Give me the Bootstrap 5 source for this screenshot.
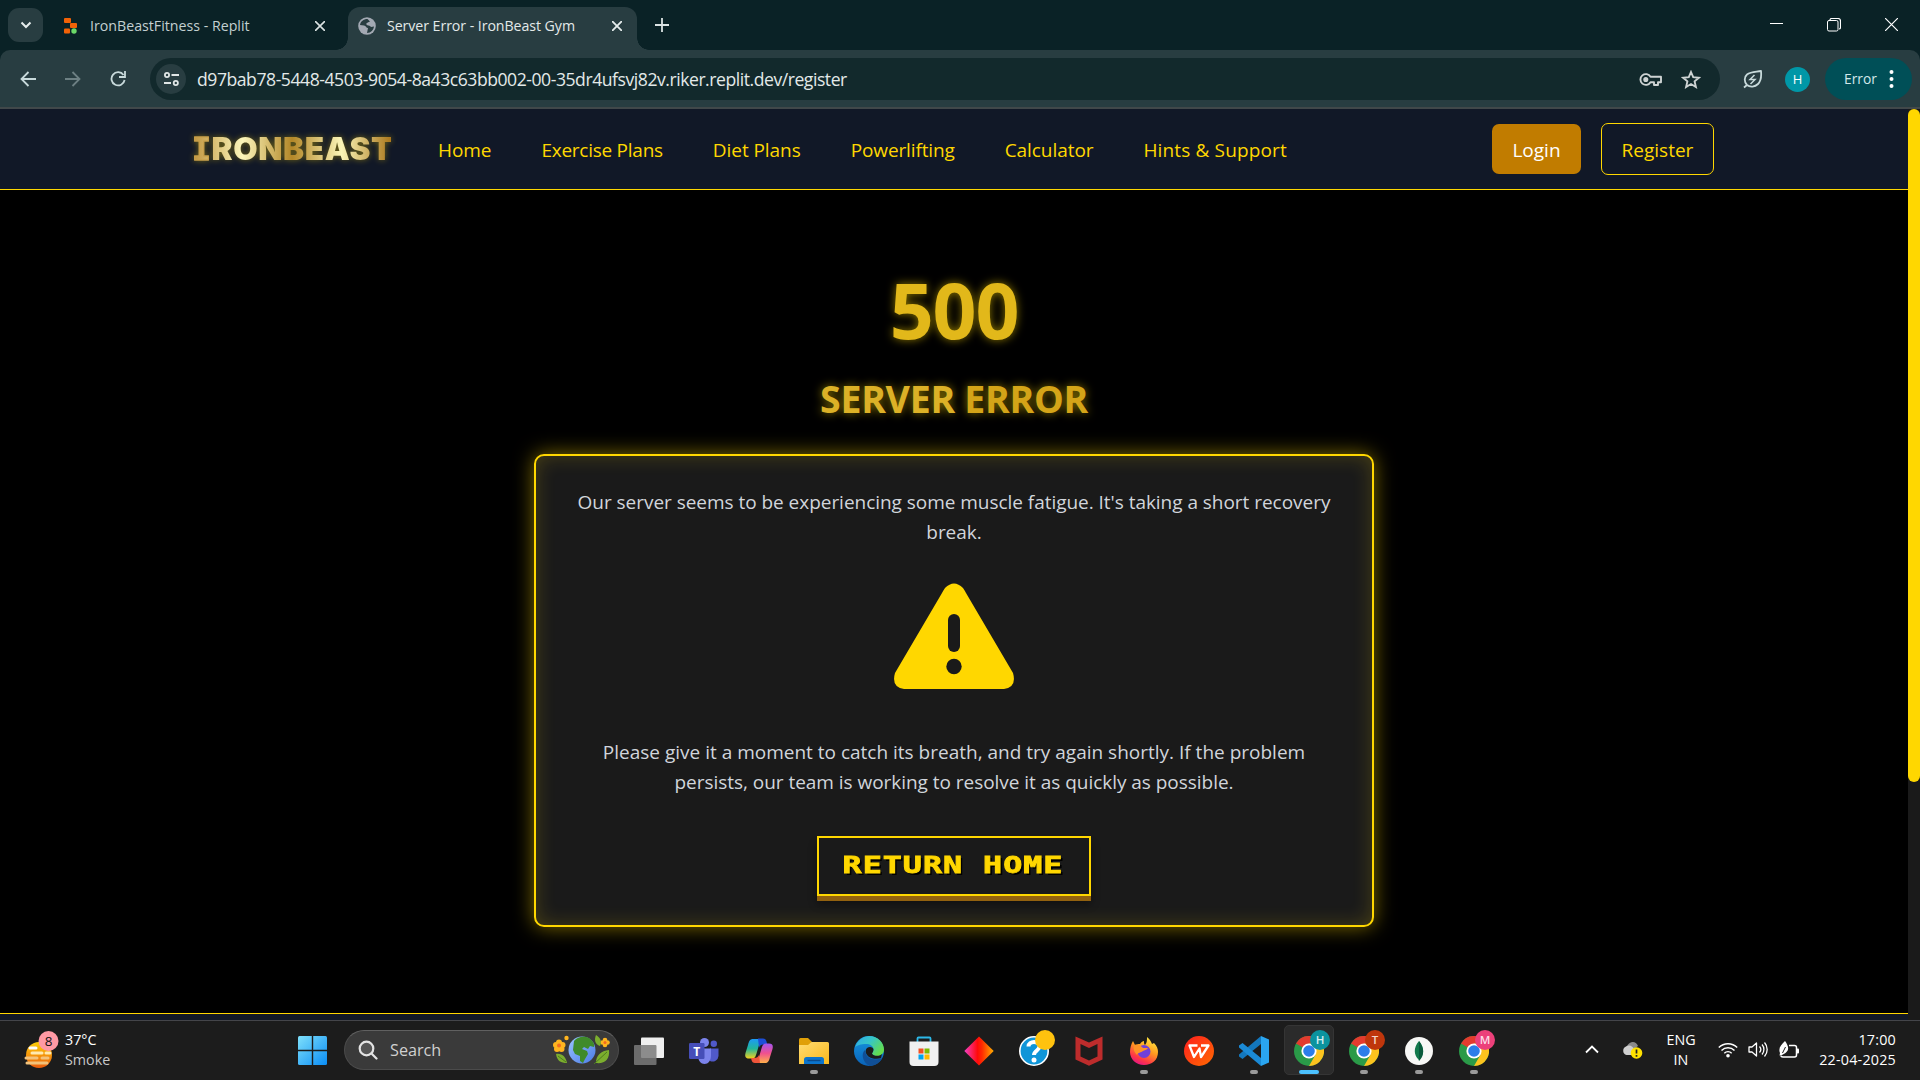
<!DOCTYPE html>
<html lang="en">
<head>
<meta charset="utf-8">
<title>Server Error - IronBeast Gym</title>
<link href="https://cdn.jsdelivr.net/npm/bootstrap@5.3.0/dist/css/bootstrap.min.css" rel="stylesheet">
<style>
:root{--gold:#ffd700}
html,body{height:100%}
body{width:1920px;height:1080px;overflow:hidden;background:#000;font-family:"Open Sans","Noto Sans",sans-serif;font-size:19px;line-height:30px;color:#d1d5db}
svg{display:block;flex:none}
span,p,a{white-space:nowrap}
/* browser frame */
.tabstrip{height:50px;background:#0a2226;font-size:14.2px;padding-left:8px}
.tabsearch{width:35px;height:34px;border-radius:11px;background:#283d41;margin-top:8px}
.tab-idle{width:305px;height:43px;margin-top:4px;padding:0 23px 0 21px;color:#c3d0d1}
.tab-live{width:289px;height:43px;margin-top:7px;border-radius:12px 12px 0 0;background:#283d41;padding:0 15px 6px 10px;color:#e3e9e9;position:relative}
.tab-live::before,.tab-live::after{content:"";position:absolute;bottom:0;width:12px;height:12px}
.tab-live::before{left:-12px;background:radial-gradient(circle at 0 0,transparent 11.5px,#283d41 12px)}
.tab-live::after{right:-12px;background:radial-gradient(circle at 100% 0,transparent 11.5px,#283d41 12px)}
.tab-name{margin-left:13px}
.tab-live .tab-name{margin-left:11px;letter-spacing:-.07px}
.tab-add{margin:18px 0 0 18px}
.wincontrols{padding:18px 22px 0 0;gap:44px}
.toolbar-wrap{background:#0a2226}
.browserbar{height:57px;background:#283d41;border-radius:10px 10px 0 0;padding:1px 8px 0 20px}
.navkeys{gap:29px}
.frameline{height:2px;background:#41484a}
.omni{width:1570px;height:42px;border-radius:21px;background:#12292c;margin-left:24px;padding:0 19px 0 6px;font-size:17.6px;letter-spacing:-.46px;color:#e3e9e9}
.siteinfo{width:30px;height:30px;border-radius:50%;background:#283d41;margin-right:11px}
.ico-star{margin-left:18px}
.ico-leaf{margin-left:23px}
.avatar-h{width:25px;height:25px;border-radius:50%;background:#0097a7;color:#fff;font-size:13px;margin-left:22px}
.errpill{width:87px;height:42px;border-radius:21px;background:#004f57;color:#d3e8ea;font-size:13.8px;margin-left:15px;padding:0 18px 0 19px}
/* page */
.viewport{height:911px;overflow:hidden}
.pagebody{width:1908px;background:#000}
.scrolltrack{width:12px;background:#1a1a1a}
.scrollthumb{height:673px;border-radius:6px;background:var(--gold)}
.sitenav{height:81px;background:#111827;border-bottom:1px solid var(--gold);padding:0 194px 0 193px}
.brandname{font-family:Inter,sans-serif;font-weight:900;font-size:31.5px;line-height:40px;letter-spacing:.6px;background:linear-gradient(90deg,#bf953f 0%,#fcf6ba 25%,#b38728 50%,#fbf5b7 75%,#aa771c 100%);-webkit-background-clip:text;background-clip:text;color:transparent;filter:drop-shadow(0 0 3px rgba(255,215,0,.4));width:198px}
.brandname b{font-family:"DejaVu Sans Mono",monospace;font-weight:700;-webkit-text-stroke:1px #c99f48;margin-left:-1px}
.menu{gap:50px;margin-left:47px;margin-top:1px}
.menu a{color:var(--gold);text-decoration:none;letter-spacing:-.06px}
.menu a:nth-child(2){letter-spacing:-.26px}
.menu a:nth-child(4){letter-spacing:-.13px}
.menu a:nth-child(6){letter-spacing:.14px}
.btn-login,.btn-reg{border-radius:7px;font-size:19px;line-height:30px;padding:2px 0 0}
.btn-login{width:89px;height:50px;background:#c17c00;color:#fff}
.btn-reg{width:113px;height:52px;border:1px solid var(--gold);color:var(--gold);margin-left:20px}
.goldtext{font-weight:700;text-shadow:0 0 10px rgba(255,215,0,.55)}
.code{font-size:77px;line-height:80px;letter-spacing:-1.2px;margin-top:80px;color:#e2b81a}
.title{font-size:37.5px;line-height:44px;letter-spacing:-.3px;margin-top:27px;color:#dcb127}
.title i{font-style:normal;color:#d4a418}
.errbox{width:840px;height:473px;margin-top:33px;border:2px solid var(--gold);border-radius:10px;background:#1a1a1a;box-shadow:0 0 20px rgba(255,215,0,.5),inset 0 0 20px rgba(255,215,0,.2);padding-top:31px}
.msg{letter-spacing:-.035px}
.warn{margin:36px 0 47px}
.retro{width:274px;height:60px;border:2px solid var(--gold);background:#1a1a1a;box-shadow:0 5px 0 #92610f,0 8px 8px rgba(0,0,0,.4);margin-top:39px}
.retro span{font-family:"DejaVu Sans Mono",monospace;font-weight:700;font-size:23px;letter-spacing:.7px;color:var(--gold);transform:scaleX(1.38);text-shadow:1.5px 2px 0 #000;-webkit-text-stroke:.8px var(--gold);margin:-3px 0 0 -2px}
.sitefoot{height:7px;background:#111827;border-top:1px solid var(--gold);margin-top:86px}
/* taskbar */
.taskbar{height:60px;background:#1c1c1c;border-top:1px solid #44454a;font-size:14.3px;line-height:20px;color:#fff}
.weather{width:298px;padding-left:24px}
.weather-txt{margin:-2px 0 0 6px}
.dim{color:#c8c8c8}
.search{width:275px;height:40px;border-radius:20px;background:#3a3a3a;border:1px solid #4b4b4b;border-top-color:#606060;margin:-1px 0 0 17px;padding:0 8px 0 13px;font-size:16.2px;color:#d0d0d0}
.search span{margin-left:12px}
.apps{margin-left:2.5px}
.slot{width:55px;height:59px;position:relative}
.slot.run::after{content:"";position:absolute;left:23.5px;top:49px;width:8px;height:4px;border-radius:2px;background:#9a9a9a}
.slot.live::before{content:"";position:absolute;left:2px;top:4px;width:50px;height:50px;border-radius:5px;background:#2b2b2b;border:1px solid #353535}
.slot.live::after{left:17.5px;width:20px;background:#4cc2ff}
.slot svg{position:relative;overflow:visible}
svg text{font-family:"Open Sans",sans-serif;text-anchor:middle}
.tray{padding:0 24px 2px 0}
.tray-cloud{margin-left:23px}
.tray-lang{width:32px;margin-left:22px}
.tray-set{gap:10px;margin-left:21px}
.tray-time{margin-left:18px;width:78px;letter-spacing:.22px}
</style>
<script src="https://cdn.jsdelivr.net/npm/bootstrap@5.3.0/dist/js/bootstrap.bundle.min.js"></script>
</head>
<body class="d-flex flex-column">
<svg width="0" height="0" class="position-absolute">
  <defs>
    <linearGradient id="win" x1="0" y1="0" x2="1" y2="1"><stop offset="0" stop-color="#7fe0fb"/><stop offset="1" stop-color="#0a8df5"/></linearGradient>
    <linearGradient id="sun" x1="0" y1="0" x2="0" y2="1"><stop offset="0" stop-color="#ffcf0a"/><stop offset="1" stop-color="#ea5b0c"/></linearGradient>
    <linearGradient id="fold" x1="0" y1="0" x2="1" y2="1"><stop offset="0" stop-color="#ffdc73"/><stop offset="1" stop-color="#f9b81a"/></linearGradient>
    <linearGradient id="edgeTop" x1="0" y1="0" x2="1" y2=".6"><stop offset="0" stop-color="#2fa8e8"/><stop offset=".5" stop-color="#36c6c8"/><stop offset="1" stop-color="#64dd4c"/></linearGradient>
    <linearGradient id="edgeLow" x1="0" y1="0" x2="0" y2="1"><stop offset="0" stop-color="#1697e0"/><stop offset="1" stop-color="#0a62b8"/></linearGradient>
    <linearGradient id="dia"><stop offset="0" stop-color="#f43fc8"/><stop offset=".45" stop-color="#ff0a0a"/><stop offset=".6" stop-color="#ff2a00"/><stop offset="1" stop-color="#ffb000"/></linearGradient>
    <linearGradient id="fox" x1=".8" y1="0" x2=".3" y2="1"><stop offset="0" stop-color="#fff044"/><stop offset=".45" stop-color="#ff9a1f"/><stop offset=".8" stop-color="#ff3647"/><stop offset="1" stop-color="#e31587"/></linearGradient>
    <linearGradient id="wps" x1="0" y1="0" x2="1" y2="1"><stop offset="0" stop-color="#ff1f1f"/><stop offset="1" stop-color="#ff6a00"/></linearGradient>
    <linearGradient id="cpA" x1="0" y1="0" x2="0" y2="1"><stop offset="0" stop-color="#1b9af7"/><stop offset=".5" stop-color="#22b69a"/><stop offset="1" stop-color="#f4d01c"/></linearGradient>
    <linearGradient id="cpB" x1="0" y1="0" x2="0" y2="1"><stop offset="0" stop-color="#a455f0"/><stop offset=".5" stop-color="#f0508f"/><stop offset="1" stop-color="#ffb04a"/></linearGradient>
    <linearGradient id="earth" x1="0" y1="0" x2="1" y2="1"><stop offset="0" stop-color="#9cc4ff"/><stop offset="1" stop-color="#4a7be6"/></linearGradient>
    <symbol id="chrome" viewBox="0 0 30 30"><circle cx="15" cy="15" r="15" fill="#2a9a48"/><path d="M15 15 2 7.500A15 15 0 0 1 28 7.500H15z" fill="#e33b2e"/><path d="M15 7.500H28A15 15 0 0 1 15 30L21.500 18.700z" fill="#fcc31e"/><circle cx="15" cy="15" r="7.600" fill="#fff"/><circle cx="15" cy="15" r="5.800" fill="#2b7de9"/></symbol>
  </defs>
</svg>
<header>
  <div class="tabstrip d-flex">
    <div class="tabsearch d-flex align-items-center justify-content-center"><svg width="12" height="8" fill="none" stroke="#e6eded" stroke-width="2"><path d="M1.500 1.500 6 6l4.500-4.500"/></svg></div>
    <div class="tab-idle d-flex align-items-center">
      <svg width="13" height="16"><g fill="#f26207"><rect width="7" height="5" rx="1"/><rect x="6" y="5" width="7" height="5" rx="1"/><rect y="10.500" width="6" height="5" rx="1"/></g><circle cx="10" cy="13" r="2.700" fill="#6bd968"/></svg>
      <span class="tab-name">IronBeastFitness - Replit</span>
      <svg class="ms-auto" width="10" height="10" stroke="#dbe3e3" stroke-width="1.600"><path d="M0 0l10 10M10 0 0 10"/></svg>
    </div>
    <div class="tab-live d-flex align-items-center">
      <svg width="18" height="18" viewBox="0 0 18 18"><circle cx="9" cy="9" r="8.800" fill="#a3a9b3"/><path d="M9.500 2c-4 0-7 2.500-7.500 6l4 .5c2 .2 2 2.500 4 2.500l-1 5c4 0 6.500-3 7-6.500l-3 .5c-1-2-3.500-1-4.500-2.500S11 5 12 4.500z" fill="#283d41"/></svg>
      <span class="tab-name">Server Error - IronBeast Gym</span>
      <svg class="ms-auto" width="10" height="10" stroke="#e6eded" stroke-width="1.800"><path d="M0 0l10 10M10 0 0 10"/></svg>
    </div>
    <svg class="tab-add" width="14" height="14" stroke="#dbe3e3" stroke-width="1.800"><path d="M7 0v14M0 7h14"/></svg>
    <div class="wincontrols ms-auto d-flex">
      <svg width="13" height="13" stroke="#fff"><path d="M0 5.500h13"/></svg>
      <svg width="14" height="14" fill="none" stroke="#fff"><path d="M3 2.500V2a1.500 1.500 0 0 1 1.500-1.500H11A2.500 2.500 0 0 1 13.500 3v6.500A1.500 1.500 0 0 1 12 11" stroke-width="1.200"/><rect x=".5" y="2.500" width="10.500" height="10.500" rx="1.500"/></svg>
      <svg width="13" height="13" stroke="#fff" stroke-width="1.200"><path d="M0 0l13 13M13 0 0 13"/></svg>
    </div>
  </div>
  <div class="toolbar-wrap"><div class="browserbar d-flex align-items-center">
    <div class="navkeys d-flex">
      <svg width="16" height="16" fill="none" stroke="#c8dadb" stroke-width="1.800"><path d="M16 8H2M8.500 1 1.500 8l7 7"/></svg>
      <svg width="16" height="16" fill="none" stroke="#6d8083" stroke-width="1.800"><path d="M0 8h14M7.500 1l7 7-7 7"/></svg>
      <svg width="16" height="16" fill="none" stroke="#c8dadb" stroke-width="1.800"><path d="M13.500 4A6.600 6.600 0 1 0 14.600 9M15 0v6H9"/></svg>
    </div>
    <div class="omni d-flex align-items-center">
      <div class="siteinfo d-flex align-items-center justify-content-center"><svg width="17" height="14" fill="none" stroke="#e0e6e6" stroke-width="1.800"><circle cx="4" cy="3" r="2.100"/><path d="M8.500 3H16M1 11h7"/><circle cx="12.800" cy="11" r="2.100"/></svg></div>
      <span>d97bab78-5448-4503-9054-8a43c63bb002-00-35dr4ufsvj82v.riker.replit.dev/register</span>
      <svg class="ms-auto" width="24" height="15" fill="none" stroke="#ced3d3" stroke-width="1.900"><path d="M11.500 4.800a5.400 5.400 0 1 0 0 5.400H15V13h4v-2.800h3V4.800z" stroke-linejoin="round"/><circle cx="6.800" cy="7.500" r="1.600" fill="#ced3d3"/></svg>
      <svg class="ico-star" width="20" height="19" fill="none" stroke="#ced3d3" stroke-width="1.900"><path d="m10 2 2.200 5.200 5.700.5-4.300 3.700 1.300 5.600-4.900-3-4.900 3 1.300-5.600-4.300-3.700 5.700-.5z"/></svg>
    </div>
    <svg class="ico-leaf" width="20" height="19" fill="none" stroke="#c8dadb" stroke-width="1.800"><path d="M1 17.500 4 15c-3-3-3-8 0-10.500C8 1.500 13 2 18 1c.5 5 0 10-3 13-3 3-8 3.500-11 1" stroke-linejoin="round"/><path d="m11.500 5-4.500 4.500h5L7.500 14" stroke-width="1.500"/></svg>
    <div class="avatar-h d-flex align-items-center justify-content-center">H</div>
    <div class="errpill d-flex align-items-center justify-content-between"><span>Error</span><svg width="5" height="18" fill="#fff"><circle cx="2.500" cy="2" r="2"/><circle cx="2.500" cy="9" r="2"/><circle cx="2.500" cy="16" r="2"/></svg></div>
  </div></div>
  <div class="frameline"></div>
</header>

<div class="viewport d-flex">
  <div class="pagebody d-flex flex-column">
    <nav class="sitenav d-flex align-items-center">
      <span class="brandname"><b>I</b>RONBEAST</span>
      <div class="menu d-flex">
        <a href="#">Home</a><a href="#">Exercise Plans</a><a href="#">Diet Plans</a><a href="#">Powerlifting</a><a href="#">Calculator</a><a href="#">Hints &amp; Support</a>
      </div>
      <button class="btn btn-login ms-auto">Login</button>
      <button class="btn btn-reg">Register</button>
    </nav>
    <main class="d-flex flex-column align-items-center text-center">
      <span class="goldtext code">500</span>
      <span class="goldtext title">SERVER <i>ERROR</i></span>
      <section class="errbox d-flex flex-column align-items-center">
        <span class="msg">Our server seems to be experiencing some muscle fatigue. It's taking a short recovery</span>
        <span class="msg">break.</span>
        <svg class="warn" width="122" height="107" viewBox="0 0 122 107"><path d="M52 5Q61-4 70 5Q72 8 73 10L120 90Q124 104 111 106H11Q-2 104 2 90L49 10Q50 8 52 5Z" fill="#ffd700"/><rect x="55" y="31" width="12" height="38" rx="6" fill="#1a1a1a"/><circle cx="61" cy="83.500" r="7.700" fill="#1a1a1a"/></svg>
        <span>Please give it a moment to catch its breath, and try again shortly. If the problem</span>
        <span class="msg">persists, our team is working to resolve it as quickly as possible.</span>
        <div class="retro d-flex align-items-center justify-content-center"><span>RETURN HOME</span></div>
      </section>
    </main>
    <footer class="sitefoot"></footer>
  </div>
  <div class="scrolltrack"><div class="scrollthumb"></div></div>
</div>

<div class="taskbar d-flex align-items-center">
  <div class="weather d-flex align-items-center">
    <svg width="35" height="40"><circle cx="15" cy="24" r="13" fill="url(#sun)"/><g stroke="#f3c27a" stroke-width="3" stroke-linecap="round"><path d="M6 17h6" stroke="#fff"/><path d="M8 22h10M22 22h4" stroke="#ffe9b0"/><path d="M2 27h11M18 27h6"/><path d="M3 32h20"/></g><circle cx="24.500" cy="10" r="10" fill="#ff99a4"/><text x="24.500" y="15" font-size="13.500" fill="#111">8</text></svg>
    <div class="weather-txt">37°C<br><span class="dim">Smoke</span></div>
  </div>
  <svg width="29" height="29" fill="url(#win)"><rect width="29" height="29" rx="1.500"/><path d="M14.500 0v29M0 14.500h29" stroke="#1c1c1c" stroke-width="1.400"/></svg>
  <div class="search d-flex align-items-center">
    <svg width="20" height="20" fill="none" stroke="#e3e3e3" stroke-width="2.200"><circle cx="8.500" cy="8.500" r="6.800" fill="#555"/><path d="m13.500 13.500 5 5" stroke-linecap="round"/></svg>
    <span>Search</span>
    <svg class="ms-auto" width="57" height="32" viewBox="0 0 57 32">
      <g fill="#ffb51f"><circle cx="6" cy="8.500" r="3"/><circle cx="3" cy="11" r="3"/><circle cx="9.500" cy="11" r="3"/><circle cx="4" cy="15" r="3"/><circle cx="8.500" cy="15" r="3"/><circle cx="13.500" cy="4" r="2.200"/><circle cx="52" cy="6" r="2.300"/><circle cx="49.500" cy="8.500" r="2.300"/><circle cx="54.500" cy="8.500" r="2.300"/><circle cx="52" cy="11" r="2.300"/></g><circle cx="6" cy="11.500" r="2" fill="#f26b21"/><circle cx="52" cy="8.500" r="1.500" fill="#f26b21"/>
      <path d="M3 20c6-1 10 3 11 9-6 0-10-2-11-9zM43 1c5 3 6 7 4 11-5-2-6-6-4-11zM56 16c1 9-4 14-13 13 0-8 5-12 13-13z" fill="#7cae2e"/><path d="M5 22l8 6M54 18 41 30" stroke="#4d7d1d"/>
      <circle cx="29" cy="16" r="13.500" fill="url(#earth)"/><path d="M21 7c4-5 11-5 15-3 4 3 6 6 5 9l-4-1-2 3-4-2-2 2 5 2 1 3-3 5-2 4-3-2 0-5-5-2-2-4z" fill="#3f8a2a"/>
    </svg>
  </div>
  <div class="apps d-flex">
    <div class="slot d-flex align-items-center justify-content-center"><svg width="30" height="30"><rect x="7" y="1.500" width="23" height="20.500" rx="1" fill="#efefef"/><rect y="9" width="22.500" height="20" rx="1" fill="#7a7a7a" fill-opacity=".85"/></svg></div>
    <div class="slot d-flex align-items-center justify-content-center"><svg width="30" height="30"><circle cx="15.500" cy="6.500" r="4.500" fill="#7b83eb"/><circle cx="24.800" cy="7.700" r="3.200" fill="#5059c9"/><path d="M21 12.500h8.500V20a6 6 0 0 1-8.500 5z" fill="#5059c9"/><path d="M9 12.500h13V19c0 6-3 9-6.500 9S9 25 9 19z" fill="#7b83eb"/><rect y="7" width="15.500" height="16" rx="1.200" fill="#464eb8"/><text x="7.700" y="19.500" font-size="12" font-weight="700" fill="#fff">T</text></svg></div>
    <div class="slot d-flex align-items-center justify-content-center"><svg width="30" height="30"><path d="M20 3H9C6 3 5 5 4 9L1.500 17c-1 4 .5 5.500 3.500 5.500h3c3 0 3.500-2 4.500-5L15 9c1-3.500 2-6 5-6z" fill="url(#cpA)"/><path d="M14 2.500h5c2 0 3 1 3.500 3l.8 3H19c-2 0-3 1-4 3z" fill="#1d4fd8"/><path d="M10 27h11c3 0 4-2 5-6l2.500-8c1-4-.5-5.500-3.500-5.500h-3c-3 0-3.500 2-4.500 5L15 21c-1 3.500-2 6-5 6z" fill="url(#cpB)"/><path d="M16 27h-5c-2 0-3-1-3.500-3l-.5-2h3c3 0 4-1 5-3z" fill="#f0553a"/></svg></div>
    <div class="slot run d-flex align-items-center justify-content-center"><svg width="30" height="30"><path d="M0 3.500Q0 2 1.500 2H9l3.500 3.500V9H0z" fill="#e0a008"/><path d="M0 9h9l3.500-3H28.500Q30 6 30 7.500V28H0z" fill="url(#fold)"/><path d="M5 28v-4.500Q5 21 7.500 21h15Q25 21 25 23.500V28z" fill="#0b74cc"/><path d="M8.500 24.500h13" stroke="#0a4a8c" stroke-width="1.400"/></svg></div>
    <div class="slot d-flex align-items-center justify-content-center"><svg width="30" height="30"><circle cx="15" cy="15" r="15" fill="url(#edgeLow)"/><path d="M1 11.500A15 15 0 0 1 15 0C24 0 30 6.500 30 13.500c0 4-3 6.500-7 6.500-3 0-5-1-5-2.500 0-1 1.500-1.500 1.500-4C19.500 10 16 8 12 8 7 8 2.500 9.500 1 11.500z" fill="url(#edgeTop)"/><path d="M11 14c-4 3-3 12 4.500 15.900 5 0 9-2.500 12-6.500.5-.7 0-1.400-.8-1-6 2.600-15.200.6-15.700-8.400z" fill="#104f96"/><path d="M18 17.500c0-.8 1.500-1.500 1.500-4C19.500 11.500 16 10 13 12c-3 3-1 9 6 10.500 3 .6 6 .3 8-.5l1-4c-3 3-9 2-10-.5z" fill="#1c1c1c"/></svg></div>
    <div class="slot d-flex align-items-center justify-content-center"><svg width="30" height="30"><path d="M8.500 6V2.500Q8.500 1.500 9.500 1.500h11Q21.500 1.500 21.500 2.500V6" fill="none" stroke="#2cb8e8" stroke-width="1.800"/><path d="M.5 5.500h29V26q0 4-4 4h-21q-4 0-4-4z" fill="#f0f0f0"/><path d="M9.500 12.500h5v5h-5z" fill="#f25022"/><path d="M15.500 12.500h5v5h-5z" fill="#7fba00"/><path d="M9.500 18.500h5v5h-5z" fill="#00a4ef"/><path d="M15.500 18.500h5v5h-5z" fill="#ffb900"/></svg></div>
    <div class="slot d-flex align-items-center justify-content-center"><svg width="30" height="30"><path d="M15 .5 29.700 15 15 29.500.3 15z" fill="url(#dia)"/></svg></div>
    <div class="slot d-flex align-items-center justify-content-center"><svg width="30" height="30"><circle cx="15" cy="15" r="14.200" fill="#0f95d8" stroke="#fff" stroke-width="1.600"/><path d="M9.500 10.500c0-6 11-6 11 0 0 4-5.500 4-5.500 8.500" fill="none" stroke="#fff" stroke-width="4"/><circle cx="15" cy="24" r="2.500" fill="#fff"/><circle cx="26" cy="4" r="10" fill="#ffc20e"/></svg></div>
    <div class="slot d-flex align-items-center justify-content-center"><svg width="30" height="30"><path d="m1.500.5 13.500 6 13.500-6V23.500L15 29.800 1.500 23.500z" fill="#bd2c2c"/><path d="m6.500 8 8.500 4 8.500-4v12.500L15 24.500l-8.500-4z" fill="#1c1c1c"/></svg></div>
    <div class="slot run d-flex align-items-center justify-content-center"><svg width="30" height="30"><path d="M1 16c0-4 1-8 3-11l2 4c2-1 3-1 5-1 1-2 3-3 4-3 0 2 0 3 1 4 2-2 2-5 2-8 3 2 4 5 5 7l2-1c3 3 4 6 4 9 0 8-6 13-14 13S1 23 1 16z" fill="url(#fox)"/><circle cx="15" cy="15.500" r="6.500" fill="#7040d8"/><path d="M5 9c3-1 7 0 9 3h5c-1 2-4 2-5 3-2 2-5 1-6 4-3-3-4-6-3-10z" fill="#ff9326"/></svg></div>
    <div class="slot d-flex align-items-center justify-content-center"><svg width="30" height="30"><circle cx="15" cy="15" r="15" fill="url(#wps)"/><path d="M13.500 9.500H5.500l4.500 11.500 5.500-8.500 1.500 8.500 7.500-11.500H17" fill="none" stroke="#fff" stroke-width="2.300" stroke-linejoin="round"/></svg></div>
    <div class="slot run d-flex align-items-center justify-content-center"><svg width="30" height="30"><path d="M22 0 30 3.500v23L22 30z" fill="#2aa5f0"/><path d="M22 0v8L3.500 23 0 20.500v-2z" fill="#1377bd"/><path d="M22 30v-8L3.500 7 0 9.500v2z" fill="#1b8ad6"/></svg></div>
    <div class="slot run live d-flex align-items-center justify-content-center"><svg width="30" height="30"><use href="#chrome" width="30" height="30"/><circle cx="26" cy="4" r="10" fill="#0b939e"/><text x="26" y="8.300" font-size="11.500" font-weight="600" fill="#d6eef0">H</text></svg></div>
    <div class="slot run d-flex align-items-center justify-content-center"><svg width="30" height="30"><use href="#chrome" width="30" height="30"/><circle cx="26" cy="4" r="10" fill="#bf360c"/><text x="26" y="8.300" font-size="11.500" font-weight="600" fill="#f5d6cc">T</text></svg></div>
    <div class="slot run d-flex align-items-center justify-content-center"><svg width="30" height="30"><circle cx="15" cy="15" r="14" fill="#f7f7f5"/><path d="M15 5c6 7 5 14 .5 18.500L15 25l-.5-1.500C10 19 9 12 15 5z" fill="#13794c"/><path d="M15 5v20c5-5 6-12 0-20z" fill="#0a5a3c"/></svg></div>
    <div class="slot run d-flex align-items-center justify-content-center"><svg width="30" height="30"><use href="#chrome" width="30" height="30"/><circle cx="26" cy="4" r="10" fill="#ec407a"/><text x="26" y="8.300" font-size="11.500" font-weight="600" fill="#fbdbe6">M</text></svg></div>
  </div>
  <div class="tray ms-auto d-flex align-items-center">
    <svg width="14" height="9" fill="none" stroke="#fff" stroke-width="1.800"><path d="m1 7.500 6-6 6 6"/></svg>
    <svg class="tray-cloud" width="21" height="18"><path d="M5 13a5 5 0 0 1 0-8C8-.5 14-.5 16 5z" fill="#8a8a8a"/><path d="M4.500 14A4.500 4.500 0 0 1 4 5.500C8 3 11 6 12 8v6z" fill="#cfcfcf"/><circle cx="14.500" cy="12" r="5.800" fill="#ffe100"/><path d="M14.500 8.500v4M14.500 14v1.700" stroke="#222" stroke-width="1.700"/></svg>
    <div class="tray-lang text-center">ENG<br>IN</div>
    <div class="tray-set d-flex align-items-center">
      <svg width="20" height="16" fill="none" stroke="#fff" stroke-width="1.500"><path d="M.8 5.500a13 13 0 0 1 18.400 0M3.500 8.500a9.300 9.300 0 0 1 13 0M6.300 11.300a5.400 5.400 0 0 1 7.400 0"/><circle cx="10" cy="13.800" r="1.800" fill="#fff" stroke="none"/></svg>
      <svg width="21" height="17" fill="none" stroke="#fff" stroke-width="1.300"><path d="M1 6v5h3l4.500 4V2L4 6z" stroke-linejoin="round"/><path d="M11.500 5.500a4.500 4.500 0 0 1 0 6M14 3.500a7.500 7.500 0 0 1 0 10M16.500 1.500a10.500 10.500 0 0 1 0 14"/></svg>
      <svg width="21" height="18"><path d="M10 4.500h5.500q2 0 2 2v7.500q0 2-2 2H4q-2 0-2-1.500" fill="none" stroke="#fff" stroke-width="1.500"/><rect x="17.500" y="7.500" width="2.500" height="5" rx="1" fill="#fff"/><path d="M6 0c3 4 5 9 .5 12L3 14l-2.500.5L1 12C-1 7 2 4 6 0z" fill="#fff"/><path d="M6.500 6 3.500 12" stroke="#1c1c1c"/></svg>
    </div>
    <div class="tray-time text-end">17:00<br>22-04-2025</div>
  </div>
</div>
</body>
</html>
